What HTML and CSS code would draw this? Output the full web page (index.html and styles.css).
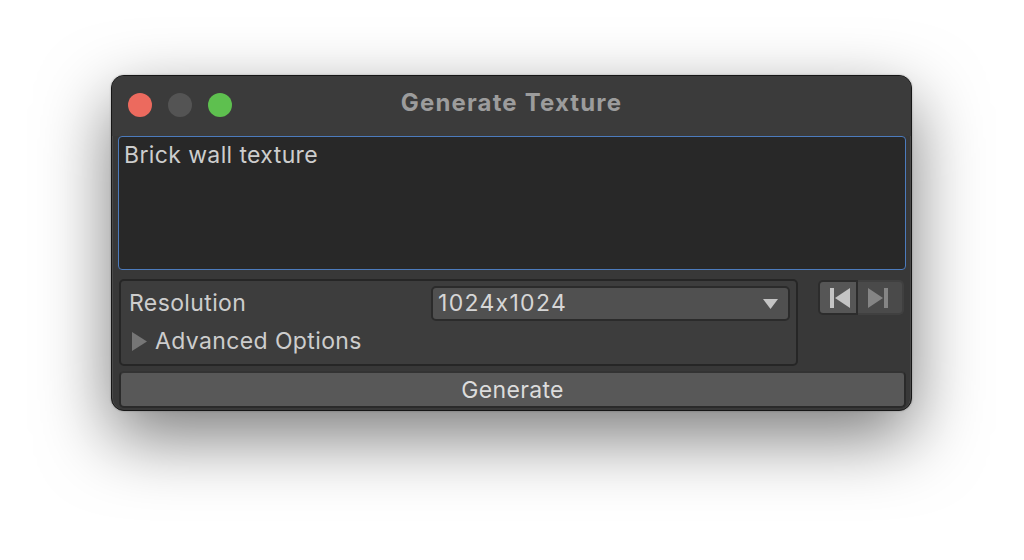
FILE: index.html
```html
<!DOCTYPE html>
<html>
<head>
<meta charset="utf-8">
<link rel="stylesheet" href="styles.css">
</head>
<body>
<div class="stage">
  <div class="window">
    <div class="titlebar">
      <div class="lights">
        <span class="light red"></span>
        <span class="light grey"></span>
        <span class="light green"></span>
      </div>
      <div class="title">Generate Texture</div>
    </div>
    <div class="content">
      <div class="prompt">Brick wall texture</div>
      <div class="mid">
        <div class="options">
          <div class="row">
            <span class="label">Resolution</span>
            <div class="dropdown">
              <span class="value">1024x1024</span>
              <svg class="caret" width="15" height="10" viewBox="0 0 15 10"><polygon points="0,0 15,0 7.5,10" fill="#c4c4c4"/></svg>
            </div>
          </div>
          <div class="foldout">
            <svg class="fold-tri" width="15" height="19" viewBox="0 0 15 19"><polygon points="0,0 15,9.5 0,19" fill="#767676"/></svg>
            <span>Advanced Options</span>
          </div>
        </div>
        <div class="nav">
          <div class="navbtn first">
            <svg width="20" height="20" viewBox="0 0 20 20"><rect x="0" y="0" width="4" height="20" fill="#c4c4c4"/><polygon points="5,10 20,0 20,20" fill="#c4c4c4"/></svg>
          </div>
          <div class="navbtn last">
            <svg width="20" height="20" viewBox="0 0 20 20"><polygon points="0,0 15,10 0,20" fill="#858585"/><rect x="16" y="0" width="4" height="20" fill="#858585"/></svg>
          </div>
        </div>
      </div>
      <div class="generate">Generate</div>
    </div>
  </div>
</div>
</body>
</html>
```

FILE: styles.css
```css
html, body {
  margin: 0;
  padding: 0;
  background: #ffffff;
}
body {
  width: 1024px;
  height: 560px;
  overflow: hidden;
  font-family: Inter, "Liberation Sans", sans-serif;
  font-feature-settings: "calt" 0;
}
.stage {
  padding: 75px 0 0 111px;
}
.window {
  width: 801px;
  height: 336px;
  box-sizing: border-box;
  background: #383838;
  border: 1px solid #161616;
  border-radius: 13px;
  box-shadow: inset 0 1px 0 #5c5c5c, inset 1px 0 0 #4a4a4a, inset -1px 0 0 #4a4a4a, 0 26px 70px rgba(0,0,0,0.52), 0 0 2px rgba(0,0,0,0.3);
  display: flex;
  flex-direction: column;
  overflow: hidden;
}
.titlebar {
  height: 60px;
  flex: none;
  position: relative;
  display: flex;
  align-items: center;
  background: #3b3b3b;
}
.lights {
  display: flex;
  gap: 16px;
  padding-left: 16px;
  margin-top: -3px;
}
.light {
  width: 24px;
  height: 24px;
  border-radius: 50%;
  display: block;
}
.red { background: #ec6a5e; }
.grey { background: #545454; }
.green { background: #5ec04f; }
.title {
  position: absolute;
  left: 0;
  right: 0;
  top: 12px;
  text-align: center;
  color: #9c9c9c;
  font-weight: 700;
  font-size: 24px;
  letter-spacing: 1.15px;
}
.content {
  flex: 1;
  display: flex;
  flex-direction: column;
  padding: 0 5px 3px 6px;
}
.prompt {
  height: 134px;
  box-sizing: border-box;
  border: 1px solid #4c7bbd;
  border-radius: 4px;
  background: #282828;
  color: #cdcdcd;
  font-size: 23px;
  padding: 4px 5px;
  line-height: 28px;
  letter-spacing: 0.38px;
}
.mid {
  display: flex;
  margin-top: 9px;
  gap: 20px;
  align-items: flex-start;
}
.options {
  width: 679px;
  height: 87px;
  margin-left: 1px;
  box-sizing: border-box;
  border: 2px solid #262626;
  border-radius: 5px;
  background: #3d3d3d;
  padding: 4px 6px 0 8px;
  color: #cdcdcd;
  font-size: 23px;
  letter-spacing: 0.38px;
}
.row {
  display: flex;
  align-items: center;
  justify-content: space-between;
  height: 36px;
}
.dropdown {
  width: 359px;
  height: 35px;
  box-sizing: border-box;
  border: 2px solid #2b2b2b;
  border-radius: 5px;
  background: #505050;
  display: flex;
  align-items: center;
  justify-content: space-between;
  padding: 0 10px 0 5px;
  color: #d6d6d6;
}
.value {
  letter-spacing: 1.3px;
}
.caret { margin-top: 2px; }
.foldout {
  display: flex;
  align-items: center;
  gap: 8px;
  height: 40px;
  padding-left: 3px;
}
.nav {
  display: flex;
  margin-top: 1px;
}
.navbtn {
  height: 35px;
  box-sizing: border-box;
  display: flex;
  align-items: center;
  justify-content: center;
}
.navbtn.first {
  width: 40px;
  background: #565656;
  border: 2px solid #2c2c2c;
  border-radius: 5px 0 0 5px;
  padding-left: 3px;
}
.navbtn.last {
  width: 46px;
  background: #4a4a4a;
  border: 2px solid #404040;
  border-left: none;
  border-radius: 0 5px 5px 0;
  padding-right: 4px;
}
.generate {
  margin-top: 5px;
  margin-left: 1px;
  height: 37px;
  box-sizing: border-box;
  border: 2px solid #2a2a2a;
  border-top-color: #333;
  border-radius: 5px;
  background: #585858;
  color: #dcdcdc;
  font-size: 23px;
  letter-spacing: 0.35px;
  display: flex;
  align-items: center;
  justify-content: center;
}
```
